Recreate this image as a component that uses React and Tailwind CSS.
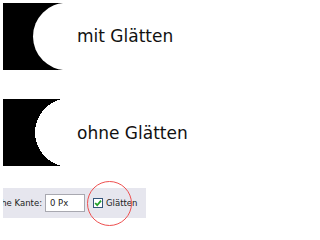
import React from 'react'

const Shape = ({ cx, cy, r, crisp }) => (
    <svg width="60" height="67" viewBox="0 0 60 67" className="shrink-0 block">
        <rect x="0" y="0" width="60" height="67" fill="#000" shapeRendering="crispEdges" />
        <circle cx={cx} cy={cy} r={r} fill="#fff" shapeRendering={crisp ? 'crispEdges' : 'geometricPrecision'} />
    </svg>
)

const App = () => {
    return (
        <div className="w-[206px] h-[240px] bg-white overflow-hidden font-['DejaVu_Sans',Verdana,sans-serif] text-[#111]">
            {/* mit Glätten */}
            <div className="flex items-center pl-[3px] pt-[3px] gap-[14px]">
                <Shape cx={63.7} cy={33.5} r={33.7} />
                <span className="text-[17px] leading-none">mit Glätten</span>
            </div>

            {/* ohne Glätten */}
            <div className="flex items-center pl-[3px] mt-[29px] gap-[14px]">
                <Shape cx={66.3} cy={33.5} r={34.3} crisp />
                <span className="text-[17px] leading-none pt-[1px]">ohne Glätten</span>
            </div>

            {/* Optionsleiste */}
            <div className="relative ml-[3px] mt-[22px] w-[143px] h-[30px] bg-[#e6e6ee] flex items-center text-[8.5px] text-[#222]">
                <div className="w-[39px] overflow-hidden flex justify-end whitespace-nowrap">
                    <span>Weiche Kante:</span>
                </div>
                <div className="ml-[3px] w-[40px] h-[18px] bg-white border border-[#a8a8b0] flex items-center pl-[4px]">
                    0 Px
                </div>
                <div className="ml-[8px] w-[10px] h-[10px] border border-[#34557a] bg-white flex items-center justify-center">
                    <svg width="8" height="8" viewBox="0 0 8 8">
                        <path d="M1.2 4 L3.2 6.2 L7 1.6" fill="none" stroke="#22a02a" strokeWidth="1.8" />
                    </svg>
                </div>
                <span className="ml-[3px]">Glätten</span>

                {/* Markierung */}
                <div className="absolute left-[84px] top-[-7px] w-[45px] h-[45px] rounded-full border border-[#ee5050]" />
            </div>
        </div>
    )
}

export default App
